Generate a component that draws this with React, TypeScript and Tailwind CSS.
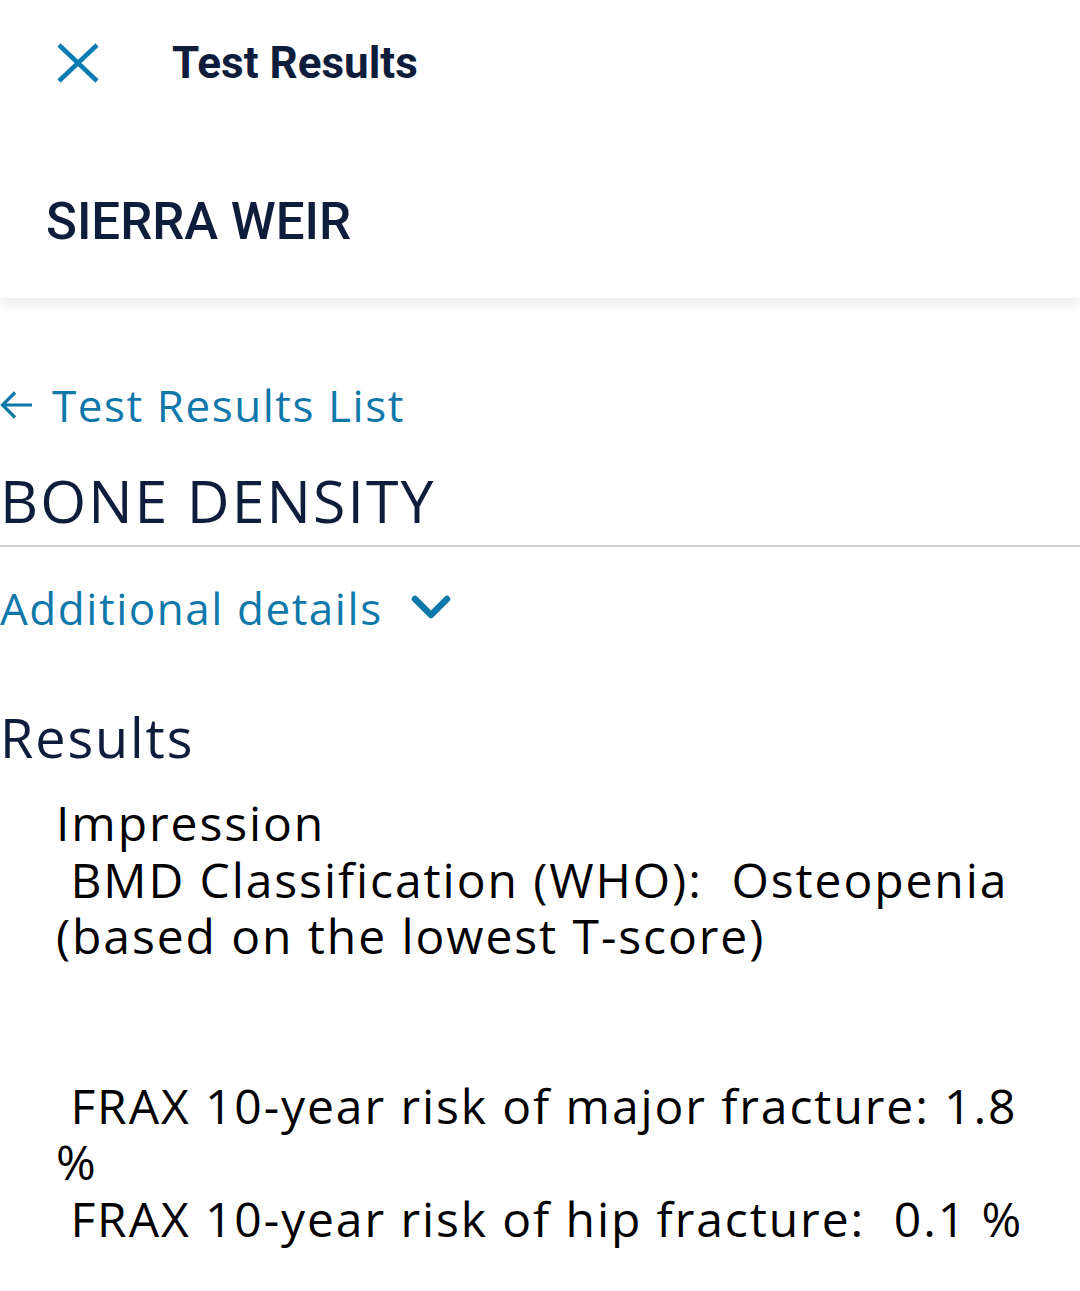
import React from 'react';

const navy = 'text-[#0f1d3c]';
const blue = 'text-[#0f78aa]';

const CloseIcon = () => (
  <svg width="42" height="40" viewBox="0 0 42 40" fill="none">
    <path d="M2 2 L40 38 M40 2 L2 38" stroke="#0b7bb3" strokeWidth="4.5" />
  </svg>
);

const ArrowLeft = () => (
  <svg width="34" height="30" viewBox="0 0 34 30" fill="none">
    <path d="M32 15 H3 M15 2.5 L2.5 15 L15 27.5" stroke="#0f78aa" strokeWidth="3.2" />
  </svg>
);

const Chevron = () => (
  <svg width="40" height="26" viewBox="0 0 40 26" fill="none">
    <path d="M4 4 L20 20 L36 4" stroke="#0f78aa" strokeWidth="6.5" strokeLinecap="round" strokeLinejoin="round" />
  </svg>
);

// lines as the report wraps them on this screen
const lines = [
  'Impression',
  ' BMD Classification (WHO):  Osteopenia',
  '(based on the lowest T-score)',
  '',
  '',
  ' FRAX 10-year risk of major fracture: 1.8',
  '%',
  ' FRAX 10-year risk of hip fracture:  0.1 %',
];

export default function App() {
  return (
    <div className="min-h-[1291px] bg-white font-['Open_Sans',sans-serif]">
      <header className="relative z-10 bg-white shadow-[0_5px_12px_rgba(0,0,0,0.09)]">
        <div className="flex h-[126px] items-center">
          <div className="flex w-[172px] justify-start pl-[57px]">
            <CloseIcon />
          </div>
          <h1 className={`font-['Roboto',sans-serif] text-[44px] font-bold ${navy}`}>Test Results</h1>
        </div>
        <div className="flex h-[172px] items-center pt-[20px] pl-[46px]">
          <span className={`font-['Roboto',sans-serif] text-[51px] font-medium ${navy}`}>SIERRA WEIR</span>
        </div>
      </header>

      <main>
        <div className={`mt-[72px] flex h-[70px] items-center gap-[18px] ${blue}`}>
          <ArrowLeft />
          <span className="text-[44px] tracking-[0.035em]">Test Results List</span>
        </div>
        <div className={`mt-[20px] flex h-[80px] items-center text-[59px] tracking-[0.035em] ${navy}`}>
          BONE DENSITY
        </div>
        <div className="mt-[5px] h-[2px] bg-[#cfcfcf]" />
        <div className={`mt-[26px] flex h-[70px] items-center gap-[28px] ${blue}`}>
          <span className="text-[44px] tracking-[0.035em]">Additional details</span>
          <Chevron />
        </div>
        <div className={`mt-[54px] flex h-[80px] items-center text-[54px] tracking-[0.035em] ${navy}`}>
          Results
        </div>
        <div className="mt-[18px] px-[56px] text-[48px] leading-[56.5px] tracking-[0.04em] text-black">
          {lines.map((line, i) => (
            <div key={i} className="h-[56.5px] whitespace-pre">
              {line}
            </div>
          ))}
        </div>
      </main>
    </div>
  );
}
